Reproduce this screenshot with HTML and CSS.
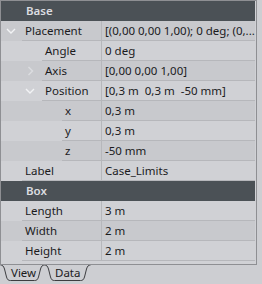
FILE: index.html
```html
<!DOCTYPE html>
<html lang="en">
<head>
    <meta charset="UTF-8">
    <title>Property view</title>
    <link rel="stylesheet" href="styles.css">
</head>
<body>
    <div class="panel">
        <div class="tree">
            <div class="group">Base</div>

            <div class="row dark">
                <span class="branch lvl0">
                    <svg class="chev" width="10" height="7" viewBox="0 0 10 7"><path d="M1 1 L5 5 L9 1" /></svg>
                </span>
                <span class="name w0">Placement</span>
                <span class="value">[(0,00 0,00 1,00); 0 deg; (0,...</span>
            </div>
            <div class="row light">
                <span class="branch lvl1"></span>
                <span class="name w1">Angle</span>
                <span class="value">0 deg</span>
            </div>
            <div class="row dark">
                <span class="branch lvl1">
                    <svg class="chev faint" width="7" height="10" viewBox="0 0 7 10"><path d="M1.5 1 L5.5 5 L1.5 9" /></svg>
                </span>
                <span class="name w1">Axis</span>
                <span class="value">[0,00 0,00 1,00]</span>
            </div>
            <div class="row light">
                <span class="branch lvl1">
                    <svg class="chev" width="10" height="7" viewBox="0 0 10 7"><path d="M1 1 L5 5 L9 1" /></svg>
                </span>
                <span class="name w1">Position</span>
                <span class="value">[0,3 m  0,3 m  -50 mm]</span>
            </div>
            <div class="row dark">
                <span class="branch lvl2"></span>
                <span class="name w2">x</span>
                <span class="value">0,3 m</span>
            </div>
            <div class="row light">
                <span class="branch lvl2"></span>
                <span class="name w2">y</span>
                <span class="value">0,3 m</span>
            </div>
            <div class="row dark">
                <span class="branch lvl2"></span>
                <span class="name w2">z</span>
                <span class="value">-50 mm</span>
            </div>
            <div class="row light">
                <span class="branch lvl0"></span>
                <span class="name w0">Label</span>
                <span class="value">Case_Limits</span>
            </div>

            <div class="group">Box</div>

            <div class="row light">
                <span class="branch lvl0"></span>
                <span class="name w0">Length</span>
                <span class="value">3 m</span>
            </div>
            <div class="row dark">
                <span class="branch lvl0"></span>
                <span class="name w0">Width</span>
                <span class="value">2 m</span>
            </div>
            <div class="row light">
                <span class="branch lvl0"></span>
                <span class="name w0">Height</span>
                <span class="value">2 m</span>
            </div>
        </div>

        <div class="tabs">
            <div class="tab">
                <svg class="tab-edge" width="45" height="20" viewBox="0 0 45 20">
                    <path d="M0.5 0 C2.5 0 3.5 1 4.5 4 L6.5 12 C7.5 15 8.5 15.5 10.5 15.5 L34.5 15.5 C36.5 15.5 37.5 15 38.5 12 L40.5 4 C41.5 1 42.5 0 44.5 0" />
                </svg>
                <span class="tab-label view">View</span>
            </div>
            <div class="tab data">
                <svg class="tab-edge" width="47" height="20" viewBox="0 0 47 20">
                    <path d="M0.5 0 C2.5 0 3.5 1 4.5 4 L6.5 12 C7.5 15 8.5 15.5 10.5 15.5 L36.5 15.5 C38.5 15.5 39.5 15 40.5 12 L42.5 4 C43.5 1 44.5 0 46.5 0" />
                </svg>
                <span class="tab-label">Data</span>
            </div>
        </div>
    </div>
</body>
</html>
```

FILE: styles.css
```css
body {
    margin: 0;
    background: #cdced2;
    font-family: "Noto Sans", "Open Sans", sans-serif;
    font-size: 11.5px;
    color: #1b1b1d;
}

.panel {
    width: 262px;
    height: 284px;
}

.tree {
    width: 254px;
    height: 260px;
    padding: 0 1px 3px 0;
    border: 1px solid #8e8f93;
    background: #d0d1d5;
}

.group {
    height: 20px;
    line-height: 20px;
    padding-left: 25px;
    background: #4b5156;
    color: #dcdde0;
    font-weight: 600;
}

.row {
    display: flex;
    height: 20px;
    line-height: 19px;
}

.row.light {
    background: #d0d1d5;
}

.row.dark {
    background: #c8c9cd;
}

.branch {
    flex: none;
    display: flex;
    align-items: center;
    justify-content: flex-end;
    height: 20px;
}

.branch.lvl0 {
    width: 21px;
}

.branch.lvl1 {
    width: 41px;
}

.branch.lvl2 {
    width: 61px;
}

.chev {
    margin-right: 7px;
    fill: none;
    stroke: #f2f3f5;
    stroke-width: 1.4;
}

.lvl0 .chev {
    margin-right: 6px;
}

.chev.faint {
    margin-right: 8px;
    stroke: #dcdde0;
}

.name,
.value {
    height: 19px;
    border-bottom: 1px solid #b6b7bb;
    padding-left: 3px;
    white-space: pre;
    overflow: hidden;
}

.name.w0 {
    width: 76px;
}

.name.w1 {
    width: 56px;
}

.name.w2 {
    width: 36px;
}

.value {
    flex: 1;
    border-left: 1px solid #b6b7bb;
}

.tabs {
    display: flex;
    height: 20px;
}

.tab {
    position: relative;
    width: 45px;
    height: 20px;
}

.tab.data {
    width: 47px;
    margin-left: -1px;
}

.tab-edge {
    position: absolute;
    left: 0;
    top: 0;
    fill: none;
    stroke: #3c3d40;
    stroke-width: 1;
}

.tab-label {
    display: block;
    padding-left: 11px;
    line-height: 15px;
    color: #1b1b1d;
}

.tab.data .tab-label {
    padding-left: 11px;
}
```
